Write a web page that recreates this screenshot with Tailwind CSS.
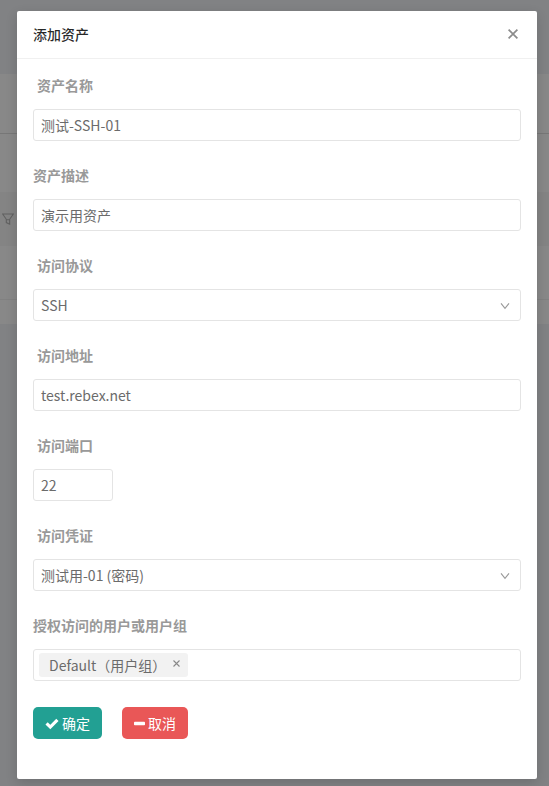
<!DOCTYPE html>
<html lang="zh-CN">
  <head>
    <meta charset="UTF-8" />
    <meta name="viewport" content="width=device-width, initial-scale=1.0" />
    <title>添加资产</title>
    <script src="https://cdn.jsdelivr.net/npm/@tailwindcss/browser@4"></script>
  </head>
  <body class="min-h-screen bg-[#ebedf0] font-['Noto_Sans_CJK_SC',sans-serif] text-sm text-[#6b6b6b]">
    <!-- page behind the dialog -->
    <div class="pt-[74px]" aria-hidden="true">
      <div class="bg-[#f8f8f8]">
        <div class="h-[60px] border-b border-[#d9d9d9]"></div>
        <div class="h-[58px]"></div>
        <div class="flex h-[54px] items-center bg-[#f0f0f0] pl-[2px]">
          <svg class="h-3 w-3" viewBox="0 0 12 12" fill="none" stroke="#b0b0b0" stroke-width="1.1">
            <path d="M.7 1h10.6L7.7 6.3v4.9L4.3 9.6V6.3z M4.3 6.7h3.4" />
          </svg>
        </div>
        <div class="h-[54px] border-b border-[#ececec]"></div>
        <div class="h-6"></div>
      </div>
    </div>

    <div class="absolute inset-0 bg-black/45">
      <div class="mt-[11px] mr-3 ml-[17px] rounded-xs bg-white shadow-[0_4px_12px_rgba(0,0,0,0.15)]" role="dialog" aria-labelledby="title">
        <div class="flex h-12 items-center justify-between border-b border-[#f0f0f0] px-4 pb-0.5">
          <h1 id="title" class="font-medium text-black/85">添加资产</h1>
          <button type="button" class="flex h-4 w-4 items-center justify-center" aria-label="关闭">
            <svg class="h-[10px] w-[10px]" viewBox="0 0 10 10" fill="none" stroke="#8c8c8c" stroke-width="1.7">
              <path d="M.6.6l8.8 8.8M9.4.6L.6 9.4" />
            </svg>
          </button>
        </div>

        <form class="px-4 pt-3 pb-10">
          <div class="mb-5">
            <label for="name" class="mb-[10px] block pl-1 leading-7 font-bold text-[#999]">资产名称</label>
            <input id="name" type="text" value="测试-SSH-01" class="block h-8 w-full rounded-[3px] border border-[#e4e4e4] px-[7px]" />
          </div>
          <div class="mb-5">
            <label for="desc" class="mb-[10px] block leading-7 font-bold text-[#999]">资产描述</label>
            <input id="desc" type="text" value="演示用资产" class="block h-8 w-full rounded-[3px] border border-[#e4e4e4] px-[7px]" />
          </div>
          <div class="mb-5">
            <label for="protocol" class="mb-[10px] block pl-1 leading-7 font-bold text-[#999]">访问协议</label>
            <div class="relative">
              <select id="protocol" class="block h-8 w-full appearance-none rounded-[3px] border border-[#e4e4e4] px-[7px]">
                <option>SSH</option>
              </select>
              <svg class="pointer-events-none absolute top-3 right-[11px] h-[10px] w-[10px]" viewBox="0 0 10 10" fill="none" stroke="#999" stroke-width="1.1">
                <path d="M1 2.4l4 5 4-5" />
              </svg>
            </div>
          </div>
          <div class="mb-5">
            <label for="host" class="mb-[10px] block pl-1 leading-7 font-bold text-[#999]">访问地址</label>
            <input id="host" type="text" value="test.rebex.net" class="block h-8 w-full rounded-[3px] border border-[#e4e4e4] px-[7px]" />
          </div>
          <div class="mb-5">
            <label for="port" class="mb-[10px] block pl-1 leading-7 font-bold text-[#999]">访问端口</label>
            <input id="port" type="text" inputmode="numeric" value="22" class="block h-8 w-20 rounded-[3px] border border-[#e4e4e4] px-[7px]" />
          </div>
          <div class="mb-5">
            <label for="credential" class="mb-[10px] block pl-1 leading-7 font-bold text-[#999]">访问凭证</label>
            <div class="relative">
              <select id="credential" class="block h-8 w-full appearance-none rounded-[3px] border border-[#e4e4e4] px-[7px]">
                <option>测试用-01 (密码)</option>
              </select>
              <svg class="pointer-events-none absolute top-3 right-[11px] h-[10px] w-[10px]" viewBox="0 0 10 10" fill="none" stroke="#999" stroke-width="1.1">
                <path d="M1 2.4l4 5 4-5" />
              </svg>
            </div>
          </div>
          <div>
            <label for="groups" class="mb-[10px] block leading-7 font-bold text-[#999]">授权访问的用户或用户组</label>
            <div class="flex h-8 items-center rounded-[3px] border border-[#e4e4e4] px-[5px]">
              <span class="flex h-6 shrink-0 items-center gap-[7px] rounded-[3px] bg-[#f2f2f2] pr-2 pl-[10px]">
                <span>Default（用户组）</span>
                <button type="button" class="mb-[3px]" aria-label="移除">
                  <svg class="h-[7px] w-[7px]" viewBox="0 0 7 7" fill="none" stroke="#888" stroke-width="1.1">
                    <path d="M.5.5l6 6M6.5.5l-6 6" />
                  </svg>
                </button>
              </span>
              <input id="groups" type="text" class="min-w-0 flex-1 outline-none" />
            </div>
          </div>

          <div class="mt-[26px] flex gap-5 text-white">
            <button type="submit" class="flex h-8 items-center gap-[3px] rounded-[5px] bg-[#22a093] px-3">
              <svg class="h-[14px] w-[14px]" viewBox="0 0 14 14" fill="none" stroke="currentColor" stroke-width="3.2">
                <path d="M1.6 7.4l3.7 3.7 7.1-7.2" />
              </svg>
              确定
            </button>
            <button type="button" class="flex h-8 items-center gap-[3px] rounded-[5px] bg-[#e95757] px-3">
              <svg class="h-[11px] w-[11px]" viewBox="0 0 11 11" fill="currentColor">
                <rect y="3.8" width="11" height="3.4" rx=".8" />
              </svg>
              取消
            </button>
          </div>
        </form>
      </div>
    </div>
  </body>
</html>
